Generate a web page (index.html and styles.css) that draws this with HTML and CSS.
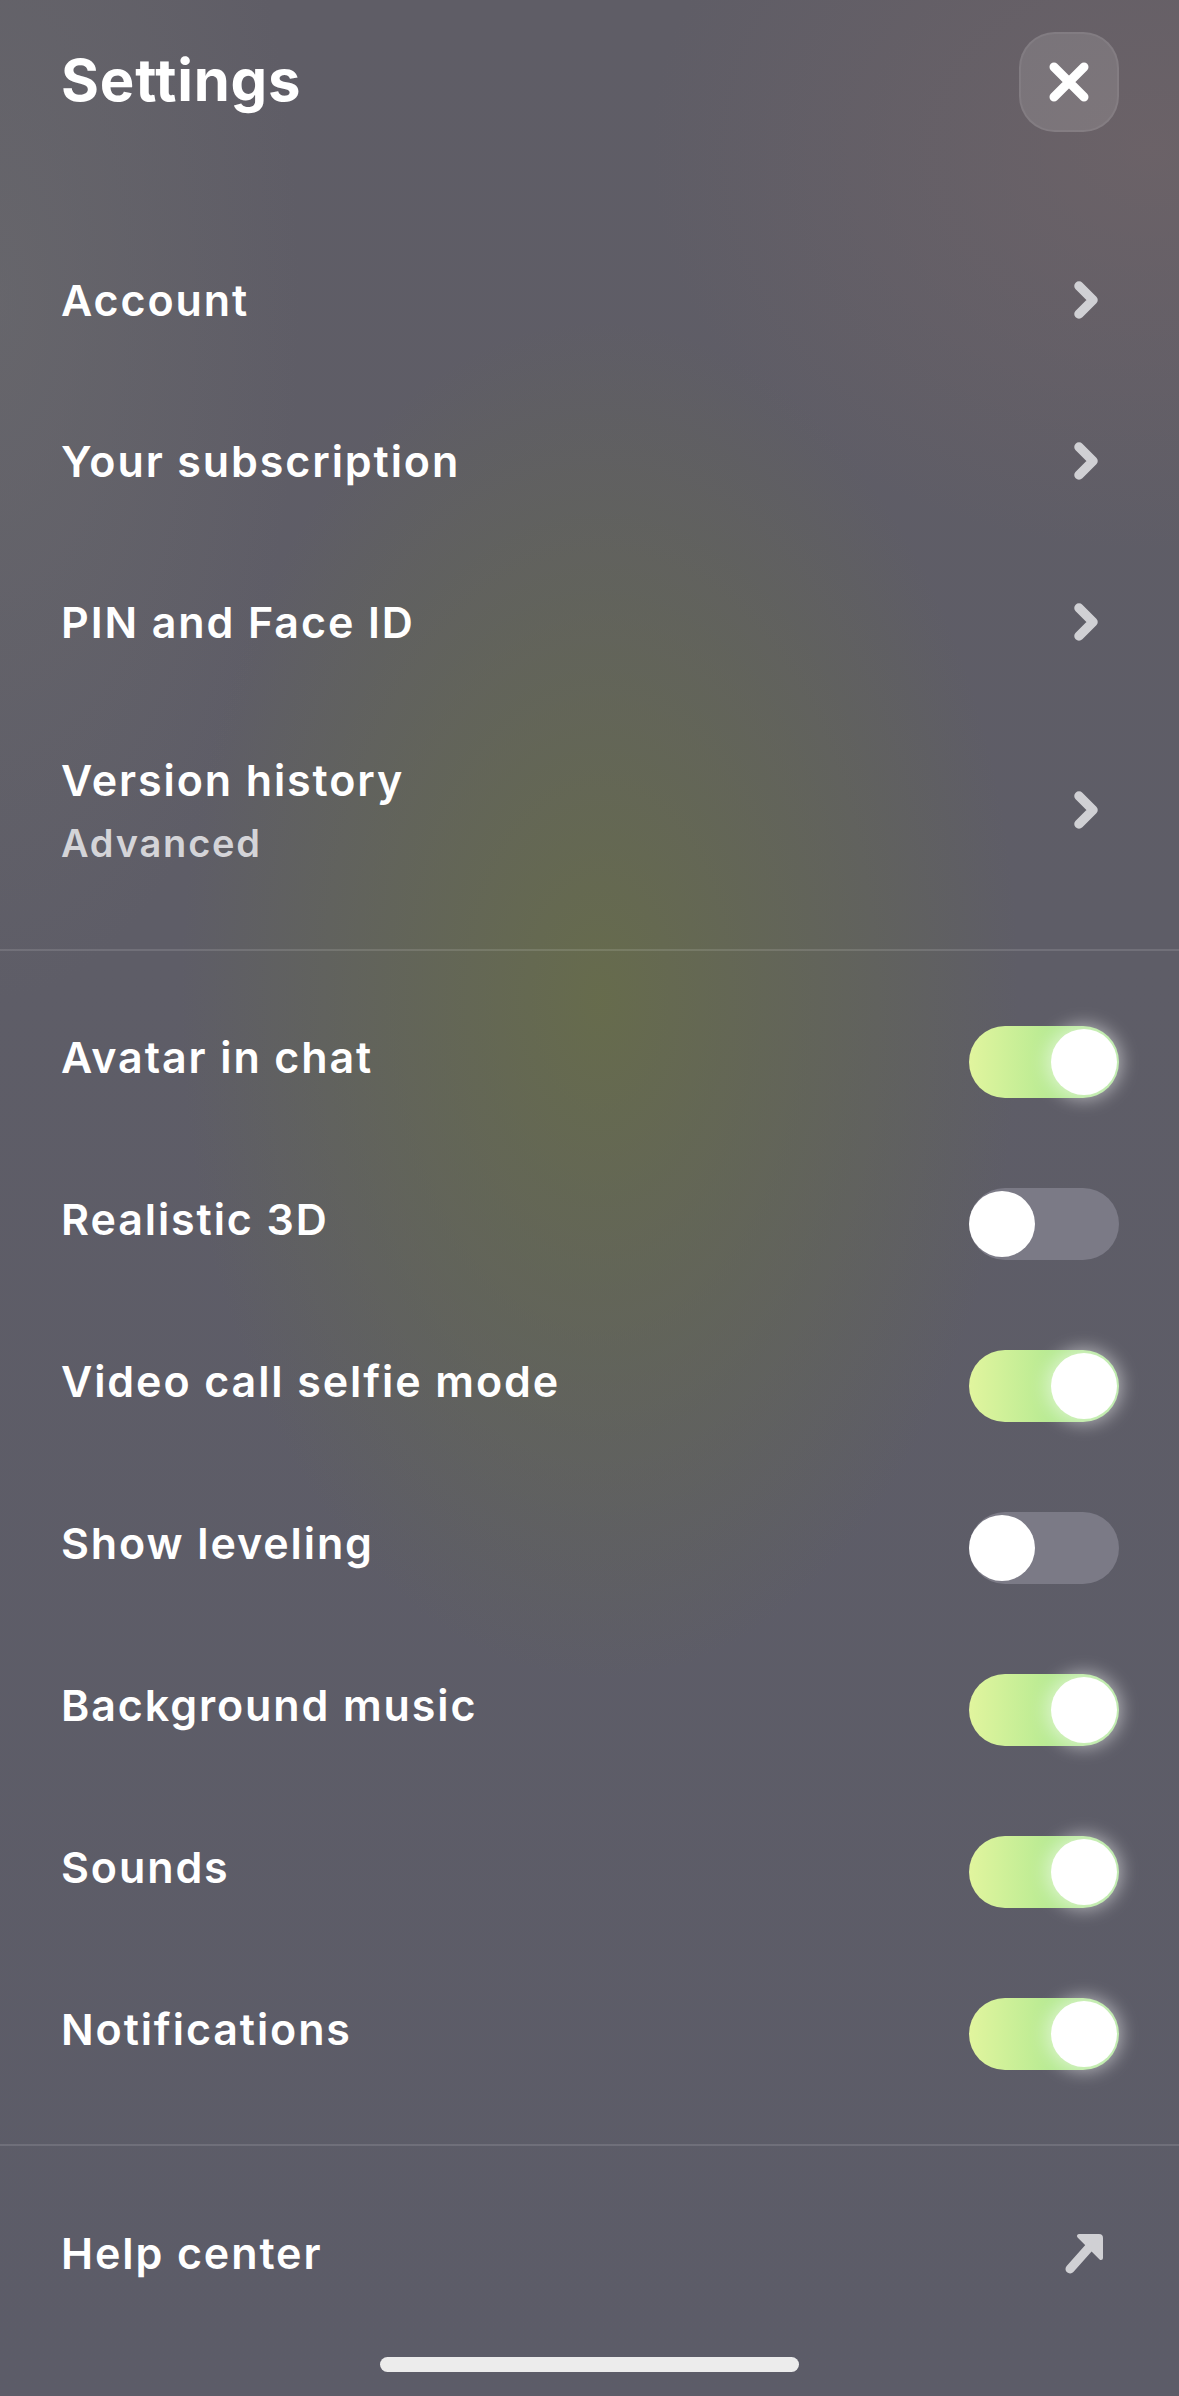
FILE: index.html
```html
<!DOCTYPE html>
<html lang="en">
<head>
<meta charset="utf-8">
<title>Settings</title>
<link rel="stylesheet" href="styles.css">
</head>
<body>
<div class="screen">
  <header class="header">
    <h1 class="title">Settings</h1>
    <button class="close" aria-label="Close">
      <svg width="40" height="40" viewBox="0 0 40 40"><path d="M5 5 L35 35 M35 5 L5 35" stroke="#fff" stroke-width="9" stroke-linecap="round" fill="none"/></svg>
    </button>
  </header>

  <section class="section nav-section">
    <div class="row"><span class="label">Account</span><svg class="chev" width="36" height="44" viewBox="0 0 36 44"><path d="M10 8 L24 22 L10 36" stroke="#d0d0d4" stroke-width="9.5" stroke-linecap="round" stroke-linejoin="round" fill="none"/></svg></div>
    <div class="row"><span class="label">Your subscription</span><svg class="chev" width="36" height="44" viewBox="0 0 36 44"><path d="M10 8 L24 22 L10 36" stroke="#d0d0d4" stroke-width="9.5" stroke-linecap="round" stroke-linejoin="round" fill="none"/></svg></div>
    <div class="row"><span class="label">PIN and Face ID</span><svg class="chev" width="36" height="44" viewBox="0 0 36 44"><path d="M10 8 L24 22 L10 36" stroke="#d0d0d4" stroke-width="9.5" stroke-linecap="round" stroke-linejoin="round" fill="none"/></svg></div>
    <div class="row row-tall">
      <div class="stack"><span class="label">Version history</span><span class="sub">Advanced</span></div>
      <svg class="chev" width="36" height="44" viewBox="0 0 36 44"><path d="M10 8 L24 22 L10 36" stroke="#d0d0d4" stroke-width="9.5" stroke-linecap="round" stroke-linejoin="round" fill="none"/></svg>
    </div>
  </section>

  <section class="section toggle-section">
    <div class="row"><span class="label">Avatar in chat</span><span class="toggle on"><span class="knob"></span></span></div>
    <div class="row"><span class="label">Realistic 3D</span><span class="toggle"><span class="knob"></span></span></div>
    <div class="row"><span class="label">Video call selfie mode</span><span class="toggle on"><span class="knob"></span></span></div>
    <div class="row"><span class="label">Show leveling</span><span class="toggle"><span class="knob"></span></span></div>
    <div class="row"><span class="label">Background music</span><span class="toggle on"><span class="knob"></span></span></div>
    <div class="row"><span class="label">Sounds</span><span class="toggle on"><span class="knob"></span></span></div>
    <div class="row"><span class="label">Notifications</span><span class="toggle on"><span class="knob"></span></span></div>
  </section>

  <section class="section help-section">
    <div class="row"><span class="label">Help center</span>
      <svg class="arrow" width="44" height="44" viewBox="0 0 44 44"><path d="M9 38 L33 11" stroke="#d0d0d4" stroke-width="9" stroke-linecap="round" fill="none"/><path d="M18 5 L38 5 Q40 5 40 7 L40 27 Z" fill="#d0d0d4" stroke="#d0d0d4" stroke-width="4" stroke-linejoin="round"/></svg>
    </div>
  </section>

  <div class="home-indicator"></div>
</div>
</body>
</html>
```

FILE: styles.css
```css
* { box-sizing: border-box; }
html, body { margin: 0; padding: 0; }
body {
  width: 1179px;
  height: 2396px;
  overflow: hidden;
  font-family: "Inter", "Lato", "Noto Sans", sans-serif;
  color: #fff;
  background-color: #5c5b67;
}
.screen {
  position: relative;
  width: 1179px;
  height: 2396px;
  display: flex;
  flex-direction: column;
  background:
    radial-gradient(ellipse 420px 680px at 600px 1000px, rgba(104,110,72,0.85), rgba(104,110,72,0) 100%),
    radial-gradient(ellipse 500px 400px at 1150px 150px, rgba(112,100,104,0.7), rgba(112,100,104,0) 100%),
    radial-gradient(ellipse 300px 700px at 0px 300px, rgba(110,110,112,0.5), rgba(110,110,112,0) 100%),
    linear-gradient(180deg, #5f5d66 0%, #5e5d67 40%, #5c5c68 100%);
}
.header {
  display: flex;
  justify-content: space-between;
  align-items: flex-start;
  padding: 32px 60px 0 61px;
  height: 219px;
}
.title {
  margin: 0;
  font-size: 58px;
  font-weight: 700;
  line-height: 96px;
  letter-spacing: 0.8px;
}
.close {
  width: 100px;
  height: 100px;
  border-radius: 36px;
  border: 2px solid rgba(255,255,255,0.06);
  background: rgba(255,255,255,0.13);
  display: flex;
  align-items: center;
  justify-content: center;
  padding: 0;
}
.section {
  display: flex;
  flex-direction: column;
}
.nav-section {
  padding-bottom: 31px;
  border-bottom: 2px solid rgba(255,255,255,0.12);
}
.toggle-section {
  padding-top: 25px;
  padding-bottom: 34px;
  border-bottom: 2px solid rgba(255,255,255,0.12);
}
.help-section {
  padding-top: 26px;
}
.row {
  height: 161px;
  display: flex;
  align-items: center;
  justify-content: space-between;
  padding: 0 60px 0 61px;
}
.toggle-section .row { height: 162px; }
.row-tall { height: 216px; }
.label {
  font-size: 43px;
  font-weight: 600;
  letter-spacing: 1.9px;
}
.stack {
  display: flex;
  flex-direction: column;
  gap: 14px;
}
.sub {
  font-size: 38px;
  font-weight: 600;
  letter-spacing: 1.8px;
  color: #d4d4d8;
}
.chev { margin-right: 14px; }
.arrow { margin-right: 14px; }
.toggle {
  position: relative;
  width: 150px;
  height: 72px;
  border-radius: 36px;
  background: #7b7a86;
  flex: none;
  margin-top: 9px;
}
.toggle.on {
  background: linear-gradient(90deg, #e1f59e 0%, #b7ea92 55%, #a3e28c 100%);
}
.knob {
  position: absolute;
  top: 3px;
  left: 0;
  width: 66px;
  height: 66px;
  border-radius: 50%;
  background: #fff;
}
.toggle.on .knob {
  left: auto;
  right: 2px;
  box-shadow: 0 0 18px 4px rgba(255,255,255,0.55);
}
.home-indicator {
  position: absolute;
  left: 380px;
  bottom: 24px;
  width: 419px;
  height: 15px;
  border-radius: 8px;
  background: #ececec;
}
```
